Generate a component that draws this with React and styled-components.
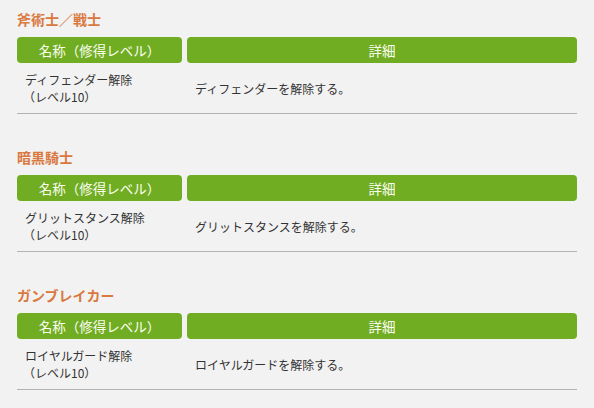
import React from 'react';
import styled, { createGlobalStyle } from 'styled-components';

const GlobalStyle = createGlobalStyle`
  html, body {
    margin: 0;
    padding: 0;
    background-color: #f2f2f2;
  }
  body {
    font-family: "Noto Sans CJK JP", "Noto Sans", sans-serif;
    color: #333333;
  }
`;

const jobs = [
  { id: 1, name: '斧術士／戦士', skill: 'ディフェンダー解除', level: 10, text: 'ディフェンダーを解除する。' },
  { id: 2, name: '暗黒騎士', skill: 'グリットスタンス解除', level: 10, text: 'グリットスタンスを解除する。' },
  { id: 3, name: 'ガンブレイカー', skill: 'ロイヤルガード解除', level: 10, text: 'ロイヤルガードを解除する。' },
];

const Page = styled.div`
  width: 560px;
  padding: 9px 17px 0;
`;

const Section = styled.section`
  margin-bottom: 33px;
`;

const JobTitle = styled.h3`
  margin: 0 0 8px;
  height: 20px;
  line-height: 20px;
  font-size: 14px;
  font-weight: bold;
  color: #d9783f;
`;

const Grid = styled.div`
  display: grid;
  grid-template-columns: 165px 1fr;
  column-gap: 5px;
`;

const HeadRow = styled(Grid)`
  height: 26px;
`;

const HeadCell = styled.div`
  background-color: #71ad22;
  border-radius: 4px;
  color: #fbfdf0;
  font-size: 13.5px;
  line-height: 26px;
  text-align: center;
`;

const BodyRow = styled(Grid)`
  height: 50px;
  align-items: center;
  border-bottom: 1px solid #b4b4b4;
`;

const BodyCell = styled.div`
  padding-left: 8px;
  font-size: 12px;
  line-height: 17px;
`;

const Level = styled.span`
  display: block;
  text-indent: -2px;
`;

function SkillTable({ job }) {
  return (
    <Section>
      <JobTitle>{job.name}</JobTitle>
      <HeadRow>
        <HeadCell>名称（修得レベル）</HeadCell>
        <HeadCell>詳細</HeadCell>
      </HeadRow>
      <BodyRow>
        <BodyCell>
          {job.skill}
          <Level>（レベル{job.level}）</Level>
        </BodyCell>
        <BodyCell>{job.text}</BodyCell>
      </BodyRow>
    </Section>
  );
}

export default function App() {
  return (
    <>
      <GlobalStyle />
      <Page>
        {jobs.map((job) => (
          <SkillTable key={job.id} job={job} />
        ))}
      </Page>
    </>
  );
}
